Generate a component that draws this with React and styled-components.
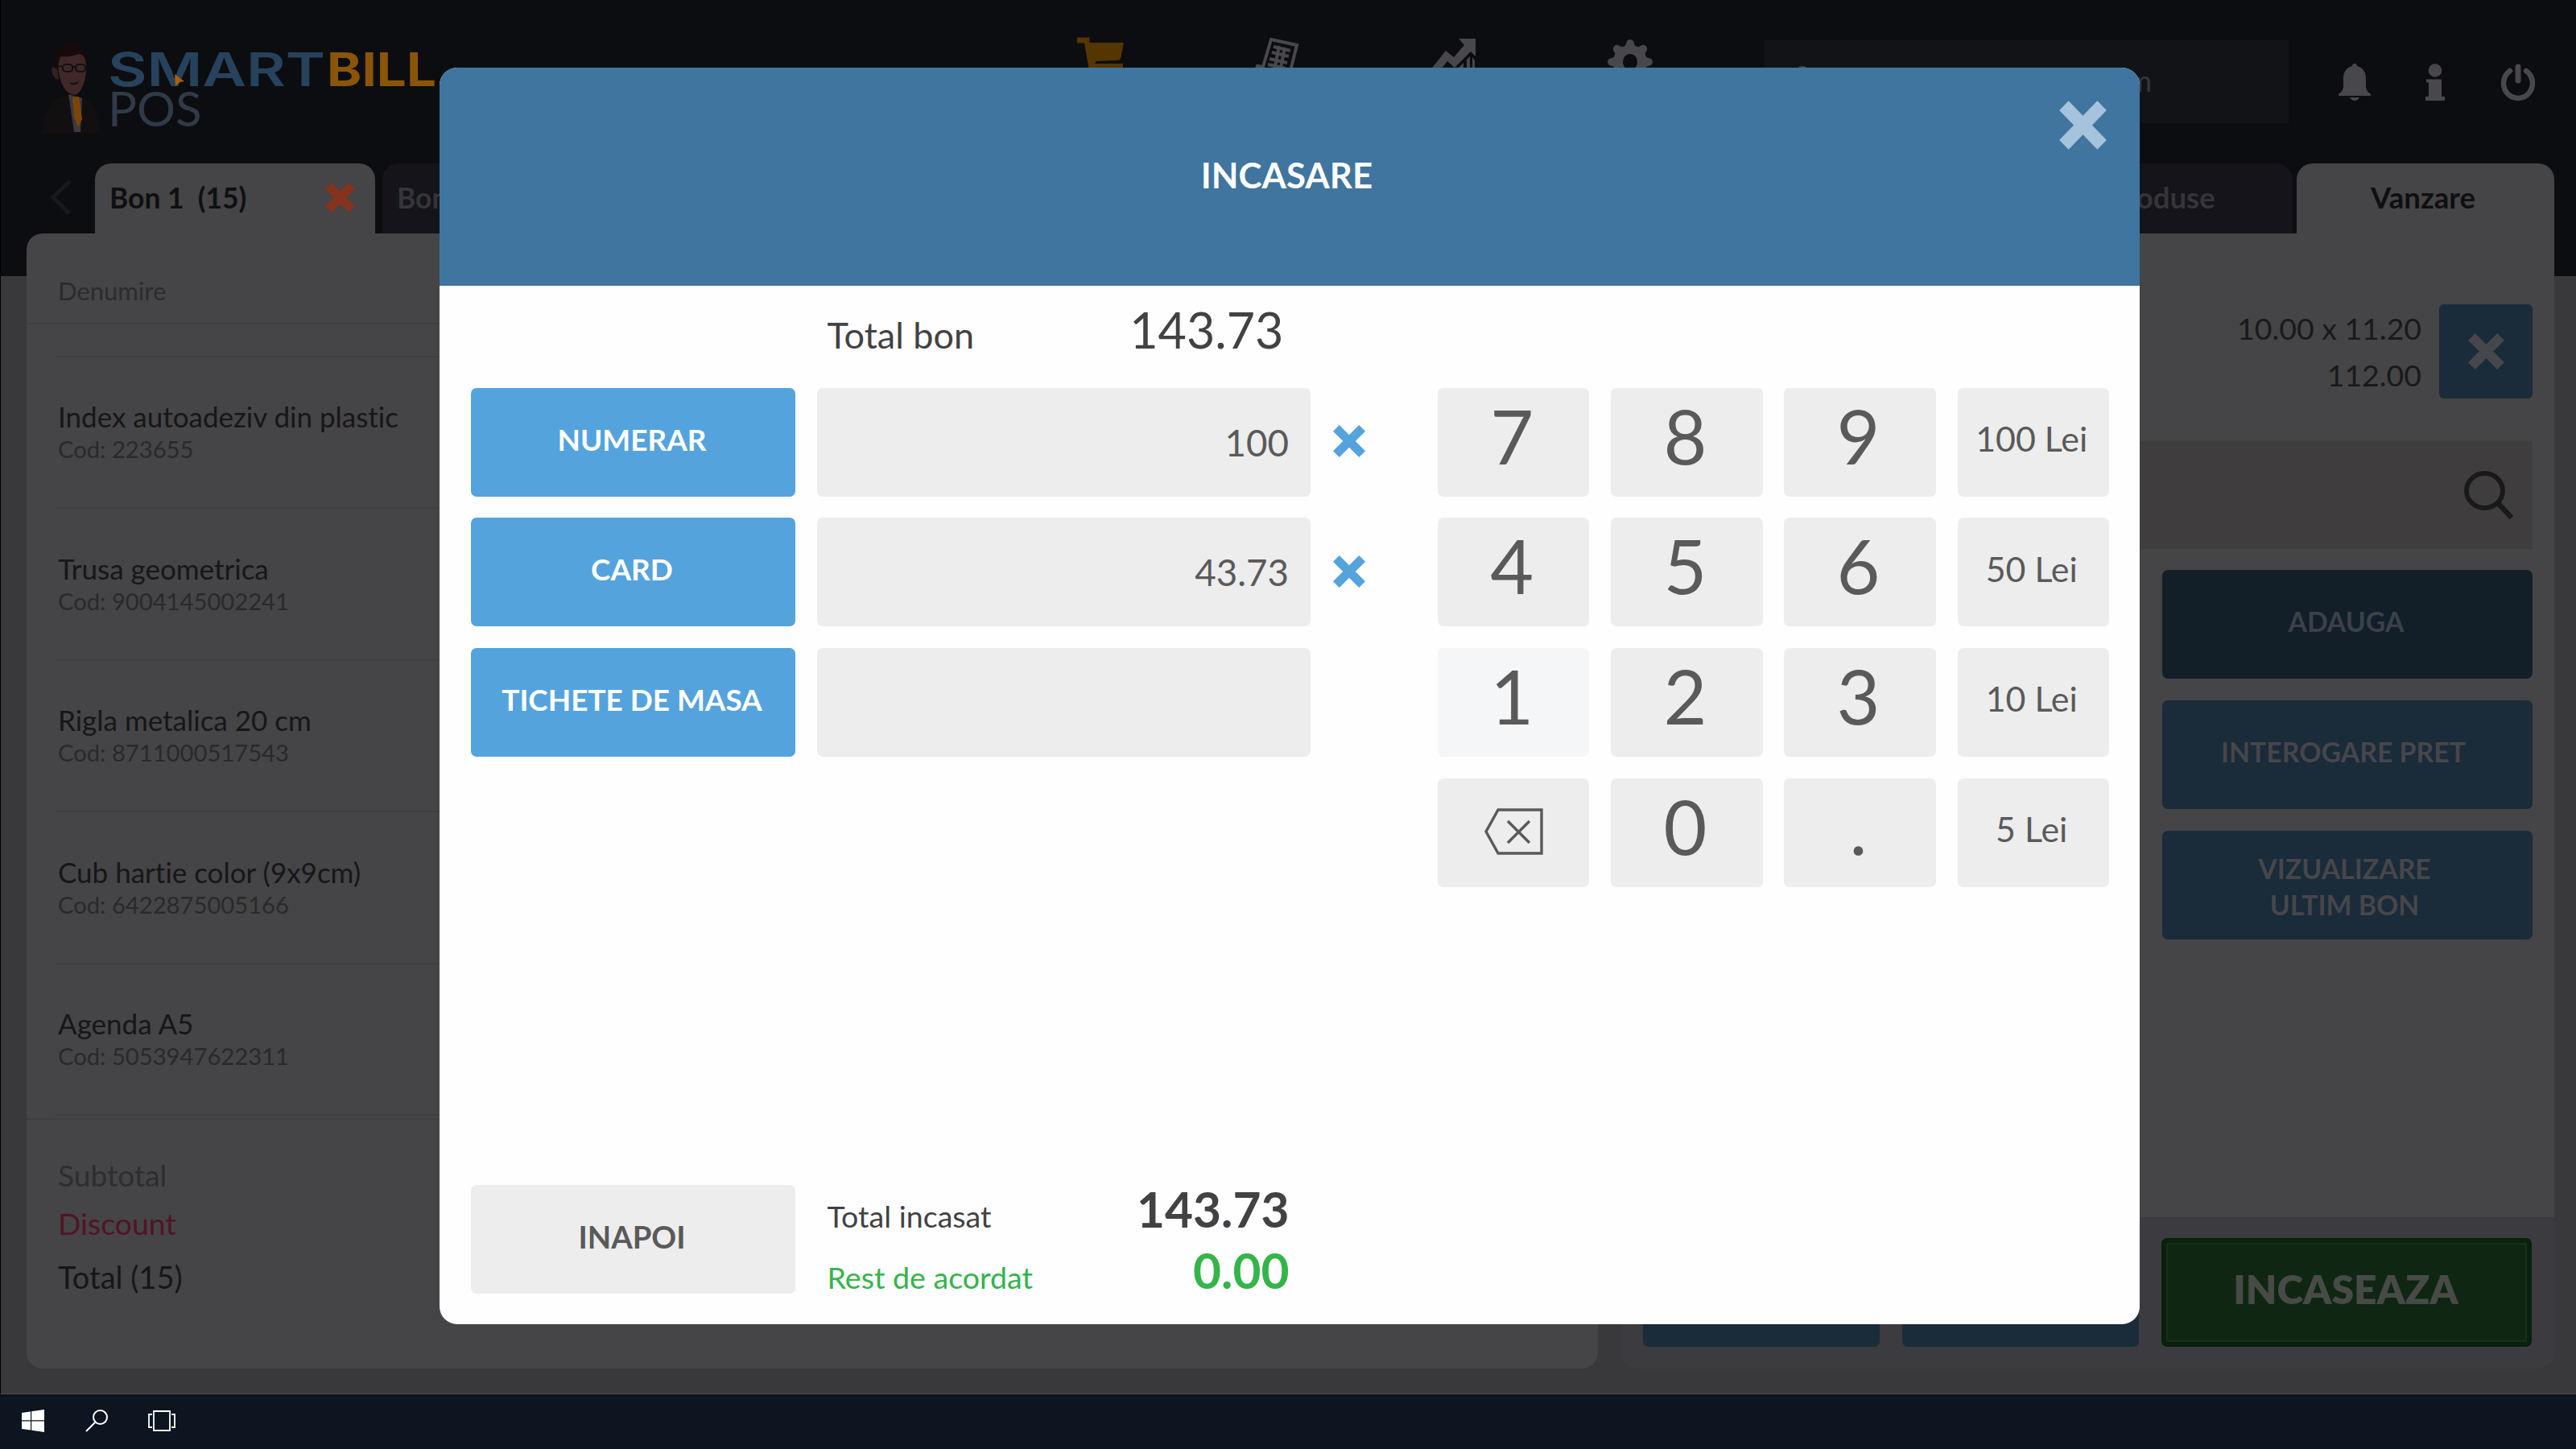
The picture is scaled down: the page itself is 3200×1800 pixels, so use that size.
import React from 'react';
import styled, { createGlobalStyle } from 'styled-components';

const Global = createGlobalStyle`
  * { box-sizing: border-box; }
  body {
    margin: 0;
    background: #000;
    font-family: Lato, 'Open Sans', sans-serif;
    font-variant-ligatures: none;
  }
`;

const Screen = styled.div`
  position: relative;
  width: 3200px;
  height: 1800px;
  overflow: hidden;
  display: flex;
  flex-direction: column;
`;

const Workspace = styled.main`
  height: 1732px;
  display: flex;
  flex-direction: column;
  border-left: 1px solid #000;
  border-bottom: 1px solid #4b4b4e;
  background: linear-gradient(#0c0d10 343px, #39393c 343px);
`;

/* ---------- top bar ---------- */
const TopBar = styled.header`
  height: 203px;
  display: flex;
  align-items: flex-start;
  padding-left: 32px;
`;
const Logo = styled.svg`
  display: block;
  width: 525px;
  height: 120px;
  margin-top: 50px;
`;
const Nav = styled.nav`
  display: flex;
  gap: 159px;
  margin: 46px 0 0 780px;
`;
const NavIcon = styled.svg`
  display: block;
  width: 60px;
  height: 60px;
`;
const UserBox = styled.div`
  display: flex;
  align-items: center;
  justify-content: space-between;
  width: 651px;
  height: 103px;
  margin: 50px 0 0 137px;
  padding: 0 170px 4px 30px;
  background: #121317;
  color: #36373b;
  font-size: 36px;
`;
const Actions = styled.div`
  display: flex;
  align-items: center;
  margin: 79px 0 0 62px;
`;
const ActionIcon = styled.svg`
  display: block;
  width: ${(p) => p.$w}px;
  height: 46px;
  margin-right: ${(p) => p.$gap || 0}px;
`;

/* ---------- columns and tabs ---------- */
const Columns = styled.div`
  display: flex;
  gap: 29px;
  padding-left: 32px;
`;
const Column = styled.section`
  width: ${(p) => p.$w}px;
  display: flex;
  flex-direction: column;
`;
const Tabs = styled.div`
  display: flex;
  height: 87px;
  justify-content: ${(p) => (p.$right ? 'flex-end' : 'flex-start')};
  gap: ${(p) => (p.$right ? 5 : 9)}px;
`;
const PrevTab = styled.svg`
  display: block;
  width: 27px;
  height: 44px;
  margin: 20px 20px 0 29px;
`;
const Tab = styled.div`
  display: flex;
  align-items: center;
  justify-content: ${(p) => (p.$center ? 'center' : 'space-between')};
  width: ${(p) => p.$w}px;
  padding: ${(p) => (p.$center ? '0 6px 3px 0' : '0 25px 3px 18px')};
  border-radius: 20px 20px 0 0;
  background: ${(p) => (p.$active ? '#454446' : '#14141a')};
  color: ${(p) => (p.$active ? '#0f0f11' : '#35353a')};
  font-size: ${(p) => (p.$center ? 36.6 : 35.4)}px;
  font-weight: 700;
  white-space: pre;
`;
const Panel = styled.div`
  display: flex;
  flex-direction: column;
  height: 1410px;
  border-radius: ${(p) => (p.$right ? '0 0 20px 20px' : '20px')};
  background: #454446;
  overflow: hidden;
`;

/* ---------- receipt ---------- */
const ListHead = styled.div`
  height: 113px;
  padding: 51px 0 0 39px;
  line-height: 40px;
  font-size: 31px;
  color: #2c2b2d;
  border-bottom: 2px solid #3f3e40;
`;
const List = styled.div`
  margin: 38.5px 0 0 35px;
  border-bottom: 2px solid #3f3e40;
`;
const Item = styled.div`
  height: 188.5px;
  padding: 51.5px 0 0 4px;
  border-top: 2px solid #403f41;
`;
const ItemName = styled.div`
  font-size: 35px;
  line-height: 44px;
  color: #161618;
`;
const ItemCode = styled.div`
  font-size: 29.2px;
  line-height: 37px;
  color: #2a292b;
`;
const Totals = styled.div`
  margin-top: 3px;
  padding: 39px 0 0 39px;
  border-top: 2px solid #3f3e40;
`;
const TotalLine = styled.div`
  font-size: ${(p) => p.$size}px;
  line-height: ${(p) => p.$line}px;
  color: ${(p) => p.$color};
`;

/* ---------- sale panel ---------- */
const PriceRow = styled.div`
  display: flex;
  justify-content: flex-end;
  gap: 22px;
  padding: 88px 27px 0;
`;
const Prices = styled.div`
  padding-top: 1px;
  font-size: 37.4px;
  line-height: 58px;
  text-align: right;
  color: #19191b;
`;
const ClearItem = styled.button`
  display: flex;
  align-items: center;
  justify-content: center;
  width: 116px;
  height: 117px;
  padding: 0;
  border: 0;
  border-radius: 6px;
  background: #1a2b39;
`;
const SearchBox = styled.div`
  display: flex;
  align-items: center;
  justify-content: flex-end;
  height: 134px;
  margin: 53px 27px 0;
  padding-right: 24px;
  background: #403d3f;
`;
const SideButtons = styled.div`
  display: flex;
  flex-direction: column;
  align-items: flex-end;
  gap: 27px;
  flex: 1;
  padding: 26px 27px 0;
`;
const SideButton = styled.button`
  width: 460px;
  height: 135px;
  padding: ${(p) => p.$pad};
  border: 0;
  border-radius: 7px;
  background: ${(p) => (p.$dark ? '#121e28' : '#1a2b39')};
  color: ${(p) => (p.$dark ? '#3a4148' : '#46464b')};
  font: 700 33.8px/45px Lato, sans-serif;
  white-space: pre-line;
`;
const Footer = styled.div`
  display: grid;
  grid-template-columns: 294px 294px 460px;
  gap: 28px;
  height: 188px;
  padding: 26px 27px 0;
  background: #3c3b3f;
`;
const FooterButton = styled.button`
  height: 135px;
  border: 0;
  border-radius: 7px;
  background: #1a2b39;
`;
const PayButton = styled(FooterButton)`
  padding: 0 2px 9px 0;
  background: #0f2712;
  border: 2px solid #07200a;
  box-shadow: inset 0 0 0 4px #0a220d, inset 0 0 0 6px #16301a;
  color: #474a46;
  font: 800 49.8px/60px Lato, sans-serif;
`;

/* ---------- payment dialog ---------- */
const Dialog = styled.div`
  position: absolute;
  left: 546px;
  top: 84px;
  width: 2112px;
  height: 1561px;
  display: flex;
  flex-direction: column;
  border-radius: 22px;
  overflow: hidden;
  background: #fefdff;
`;
const DialogHead = styled.div`
  position: relative;
  display: flex;
  align-items: center;
  justify-content: center;
  height: 271px;
  padding: 0 7px 6px 0;
  background: #3f759e;
  color: #fff;
  font-size: 43.8px;
  font-weight: 700;
`;
const CloseDialog = styled.svg`
  position: absolute;
  right: 41px;
  top: 41px;
  width: 59px;
  height: 61px;
`;
const DialogBody = styled.div`
  display: flex;
  flex: 1;
  justify-content: space-between;
  padding: 0 38px 38px 38.5px;
`;
const Payments = styled.div`
  display: flex;
  flex-direction: column;
`;
const BillTotal = styled.div`
  display: flex;
  align-items: baseline;
  justify-content: space-between;
  width: 567px;
  height: 126.5px;
  margin-left: 443px;
  padding-top: 18.5px;
  color: #424242;
`;
const Label = styled.span`
  font-size: ${(p) => p.$size}px;
`;
const Amount = styled.span`
  font-size: ${(p) => (p.$bold ? 60.4 : 61)}px;
  font-weight: ${(p) => (p.$bold ? 700 : 400)};
  line-height: ${(p) => (p.$bold ? 76 : 72)}px;
`;
const Methods = styled.div`
  display: grid;
  grid-template-columns: 403px 613px 40px;
  grid-auto-rows: 135px;
  column-gap: 27.5px;
  row-gap: 26.7px;
`;
const Method = styled.button`
  padding: 0 2px 7px 0;
  border: 0;
  border-radius: 7px;
  background: ${(p) => (p.$plain ? '#ededee' : '#55a3dd')};
  color: ${(p) => (p.$plain ? '#5a5a5a' : '#fff')};
  font: 700 ${(p) => (p.$plain ? 38.2 : 36.9)}px/50px Lato, sans-serif;
`;
const Field = styled.div`
  display: flex;
  align-items: center;
  justify-content: flex-end;
  padding-right: 27px;
  border-radius: 7px;
  background: #ededee;
  color: #5a5a5a;
  font-size: 45.7px;
`;
const Remove = styled.div`
  display: flex;
  align-items: center;
  padding-bottom: 2px;
`;
const Summary = styled.div`
  display: grid;
  grid-template-columns: 403px 574px;
  grid-template-rows: 135px;
  column-gap: 40px;
  height: 135px;
  margin-top: auto;
`;
const SummaryLines = styled.div`
  margin-top: -8px;
`;
const SummaryLine = styled.div`
  display: flex;
  align-items: baseline;
  justify-content: space-between;
  color: ${(p) => (p.$green ? '#35b44a' : '#424242')};
`;
const Keypad = styled.div`
  display: grid;
  grid-template-columns: repeat(4, 188.5px);
  grid-auto-rows: 135px;
  gap: 26.7px;
  align-content: start;
  margin-top: 126.5px;
`;
const Key = styled.button`
  display: flex;
  align-items: center;
  justify-content: center;
  padding: ${(p) => (p.$cash ? '0 4px 8px 0' : '0 4px 17px 0')};
  border: 0;
  border-radius: 7px;
  background: ${(p) => (p.$hover ? '#f5f6f7' : '#ededee')};
  color: #5a5a5a;
  font: 400 ${(p) => (p.$cash ? 42.9 : 93)}px/100px Lato, sans-serif;
`;
const BackKey = styled(Key)`
  padding: 0 0 3px;
`;

/* ---------- system taskbar ---------- */
const Taskbar = styled.footer`
  display: flex;
  align-items: center;
  height: 68px;
  padding: 0 0 3px 27px;
  background: #0c1520;
`;
const TaskIcon = styled.svg`
  display: block;
  width: ${(p) => p.$w}px;
  height: 28px;
  margin-right: ${(p) => p.$gap || 0}px;
`;

function Cross({ size, color, stroke = 11 }) {
  const a = stroke * 0.3536;
  return (
    <svg width={size} height={size} viewBox="0 0 40 40">
      <path d={`M${a} ${a} L${40 - a} ${40 - a} M${40 - a} ${a} L${a} ${40 - a}`} stroke={color} strokeWidth={stroke} fill="none" />
    </svg>
  );
}

const items = [
  ['Index autoadeziv din plastic', '223655'],
  ['Trusa geometrica', '9004145002241'],
  ['Rigla metalica 20 cm', '8711000517543'],
  ['Cub hartie color (9x9cm)', '6422875005166'],
  ['Agenda A5', '5053947622311'],
];
const methods = [
  ['NUMERAR', '100'],
  ['CARD', '43.73'],
  ['TICHETE DE MASA', ''],
];
const keys = ['7', '8', '9', '100 Lei', '4', '5', '6', '50 Lei', '1', '2', '3', '10 Lei', 'back', '0', '.', '5 Lei'];
const grey = '#48484c';

function BrandLogo() {
  return (
    <Logo viewBox="33 50 525 120">
      <path d="M52 165 Q56 128 76 120 L103 120 Q121 128 124 165 Z" fill="#120f10" />
      <path d="M85 117 L92 164 L100 164 L102 122 Z" fill="#3a393e" />
      <path d="M90 121 L98 120 L102 148 L97 158 L92 146 Z" fill="#7a4608" />
      <path d="M72 80 Q73 62 90 62 Q107 62 107 84 Q107 106 96 117 Q86 120 79 108 Q73 98 72 80 Z" fill="#3f2827" />
      <path d="M64 86 Q66 80 71 84 L73 99 Q65 98 64 86 Z" fill="#33211f" />
      <path d="M67 84 Q66 54 91 53 Q109 54 109 80 Q106 68 98 67 Q84 72 75 70 L71 86 Z" fill="#170a0d" />
      <g fill="none" stroke="#140f13" strokeWidth="2">
        <rect x="78" y="80" width="12" height="9" rx="4" />
        <rect x="94" y="80" width="12" height="9" rx="4" />
        <path d="M72 82 L78 83 M90 83 L94 83 M87 103 Q92 106 97 102" />
      </g>
      <text x="134" y="107" fontFamily="Inter, sans-serif" fontWeight="600" fontSize="58" textLength="270" lengthAdjust="spacingAndGlyphs" fill="#27425c">SMART</text>
      <text x="406" y="107" fontFamily="Inter, sans-serif" fontWeight="700" fontSize="58" textLength="136" lengthAdjust="spacingAndGlyphs" fill="#8a5409">BILL</text>
      <path d="M217 92 L229 101 L223 102 L218 107 Z" fill="#a8600a" />
      <text x="134" y="156.500" fontFamily="Lato, sans-serif" fontSize="60" fill="#303a49">POS</text>
    </Logo>
  );
}

const teeth = [0, 45, 90, 135, 180, 225, 270, 315];

export default function App() {
  return (
    <Screen>
      <Global />
      <Workspace>
        <TopBar>
          <BrandLogo />
          <Nav>
            <NavIcon viewBox="0 0 60 60" fill="#553500">
              <path d="M0 0.500 H15.500 V7 H58 L54 27 Q53 29 50 29 L24 30 L22 33 H57 V42 H15 L9 7.500 H0 Z" />
            </NavIcon>
            <NavIcon viewBox="0 0 60 60" fill="none" stroke={grey} strokeWidth="4">
              <path d="M22 3 L54 10 L43 54 L2 46 L5 36 L12 37 Z" />
              <path d="M25 12 L46 17 M23 19 L44 24 M20 27 L42 32 M18 34 L40 39 M32 11 L26 41 M39 13 L33 43" />
            </NavIcon>
            <NavIcon viewBox="0 0 60 60" fill={grey}>
              <path d="M36 2 L57 2 L57 24 L51 18 L31 38 L22 30 L7 48 L0 42 L20 17 L30 25 L43 10 Z" />
              <path d="M46 28 L50 24 V60 H46 Z M36 38 L42 32 V60 H36 Z M53 25 L56 29 V60 H53 Z" />
            </NavIcon>
            <NavIcon viewBox="-30 -31 60 60" fill={grey}>
              {teeth.map((a) => (
                <path key={a} d="M-7 -17 L-4 -26 Q0 -30 4 -26 L7 -17 Z" transform={`rotate(${a})`} />
              ))}
              <path fillRule="evenodd" d="M0 -21 A21 21 0 1 1 -0.010 -21 Z M0 -10 A9 10 0 1 0 0.010 -10 Z" />
            </NavIcon>
          </Nav>
          <UserBox>
            <svg width="34" height="36" viewBox="0 0 34 36" fill={grey}>
              <circle cx="17" cy="9" r="9" />
              <path d="M0 36 Q0 20 17 20 Q34 20 34 36 Z" />
            </svg>
            m
          </UserBox>
          <Actions>
            <ActionIcon $w={40} $gap={68} viewBox="0 0 40 46" fill={grey}>
              <path d="M20 0 Q23 0 23 3 Q34 6 34 19 V29 Q35 35 40 38 V40 H0 V38 Q5 35 6 29 V19 Q6 6 17 3 Q17 0 20 0 Z" />
              <path d="M14 42 H26 Q24 46 20 46 Q16 46 14 42 Z" />
            </ActionIcon>
            <ActionIcon $w={24} $gap={70} viewBox="0 0 24 46" fill={grey}>
              <circle cx="12" cy="8.500" r="8.300" />
              <path d="M1 19.500 H20 V41 H24 V46 H0 V41 H4 V23.500 H1 Z" />
            </ActionIcon>
            <ActionIcon $w={42} viewBox="0 0 42 46" fill="none" stroke={grey} strokeLinecap="round">
              <path d="M11 9 A18 18.500 0 1 0 31 9" strokeWidth="6.500" />
              <path d="M21 4 V21" strokeWidth="7" />
            </ActionIcon>
          </Actions>
        </TopBar>

        <Columns>
          <Column $w={1952}>
            <Tabs>
              <PrevTab viewBox="0 0 27 44">
                <path d="M25 2 L4 22 L24 42" fill="none" stroke="#18191c" strokeWidth="5" />
              </PrevTab>
              <Tab $active $w={348}>
                {'Bon 1  (15)'}
                <Cross size={37} color="#85331d" stroke={12} />
              </Tab>
              <Tab $w={348}>Bon 2</Tab>
            </Tabs>
            <Panel>
              <ListHead>Denumire</ListHead>
              <List>
                {items.map(([name, code]) => (
                  <Item key={code}>
                    <ItemName>{name}</ItemName>
                    <ItemCode>Cod: {code}</ItemCode>
                  </Item>
                ))}
              </List>
              <Totals>
                <TotalLine $size={37.1} $line={60} $color="#2e2d2f">Subtotal</TotalLine>
                <TotalLine $size={37.4} $line={60} $color="#521425">Discount</TotalLine>
                <TotalLine $size={38} $line={73} $color="#161618">Total (15)</TotalLine>
              </Totals>
            </Panel>
          </Column>

          <Column $w={1159}>
            <Tabs $right>
              <Tab $center $w={320}>Produse</Tab>
              <Tab $center $active $w={320}>Vanzare</Tab>
            </Tabs>
            <Panel $right>
              <PriceRow>
                <Prices>
                  <div>10.00 x 11.20</div>
                  <div>112.00</div>
                </Prices>
                <ClearItem><Cross size={45} color="#46474b" /></ClearItem>
              </PriceRow>
              <SearchBox>
                <svg width="61" height="60" viewBox="0 0 61 60" fill="none" stroke="#19191b">
                  <ellipse cx="25.500" cy="24.500" rx="22.500" ry="21.500" strokeWidth="6" />
                  <path d="M42 40 L59 58" strokeWidth="6.500" />
                </svg>
              </SearchBox>
              <SideButtons>
                <SideButton $dark $pad="0 3px 7px 0">ADAUGA</SideButton>
                <SideButton $pad="0 10px 7px 0">INTEROGARE PRET</SideButton>
                <SideButton $pad="4px 7px 0 0">{'VIZUALIZARE\nULTIM BON'}</SideButton>
              </SideButtons>
              <Footer>
                <FooterButton />
                <FooterButton />
                <PayButton>INCASEAZA</PayButton>
              </Footer>
            </Panel>
          </Column>
        </Columns>
      </Workspace>

      <Taskbar>
        <TaskIcon $w={28} $gap={51} viewBox="0 0 28 28" fill="#fff">
          <path d="M0 4 L11 2.400 V13.200 H0 Z M12.200 2.200 L28 0 V13.200 H12.200 Z M0 14.500 H11 V25.600 L0 24 Z M12.200 14.500 H28 V28 L12.200 25.800 Z" />
        </TaskIcon>
        <TaskIcon $w={28} $gap={50} viewBox="0 0 28 28" fill="none" stroke="#fff" strokeWidth="2">
          <circle cx="18.500" cy="9.500" r="8.500" />
          <path d="M12.500 15.500 L1 27" />
        </TaskIcon>
        <TaskIcon $w={34} viewBox="0 0 34 28" fill="none" stroke="#fff" strokeWidth="1.800">
          <path d="M7 2 H27 V26 H7 Z M5 6 H1 V22 H5 M29 6 H33 V22 H29" />
        </TaskIcon>
      </Taskbar>

      <Dialog>
        <DialogHead>
          INCASARE
          <CloseDialog viewBox="0 0 40 40" preserveAspectRatio="none">
            <path d="M4 4 L36 36 M36 4 L4 36" stroke="#a5c3dd" strokeWidth="11" />
          </CloseDialog>
        </DialogHead>
        <DialogBody>
          <Payments>
            <BillTotal>
              <Label $size={45}>Total bon</Label>
              <Amount>143.73</Amount>
            </BillTotal>
            <Methods>
              {methods.map(([name, value]) => (
                <React.Fragment key={name}>
                  <Method>{name}</Method>
                  <Field>{value}</Field>
                  <Remove>{value && <Cross size={40} color="#55a3dd" />}</Remove>
                </React.Fragment>
              ))}
            </Methods>
            <Summary>
              <Method $plain>INAPOI</Method>
              <SummaryLines>
                <SummaryLine>
                  <Label $size={37.6}>Total incasat</Label>
                  <Amount $bold>143.73</Amount>
                </SummaryLine>
                <SummaryLine $green>
                  <Label $size={37.6}>Rest de acordat</Label>
                  <Amount $bold>0.00</Amount>
                </SummaryLine>
              </SummaryLines>
            </Summary>
          </Payments>
          <Keypad>
            {keys.map((k) => (k === 'back' ? (
              <BackKey key={k}>
                <svg width="73" height="58" viewBox="0 0 73 58" fill="none" stroke="#5a5a5a" strokeWidth="3.400">
                  <path d="M17 2 H71 V56 H17 L2 29 Z" />
                  <path d="M29 16 L56 43 M56 16 L29 43" />
                </svg>
              </BackKey>
            ) : (
              <Key key={k} $cash={k.includes('Lei')} $hover={k === '1'}>{k}</Key>
            )))}
          </Keypad>
        </DialogBody>
      </Dialog>
    </Screen>
  );
}
